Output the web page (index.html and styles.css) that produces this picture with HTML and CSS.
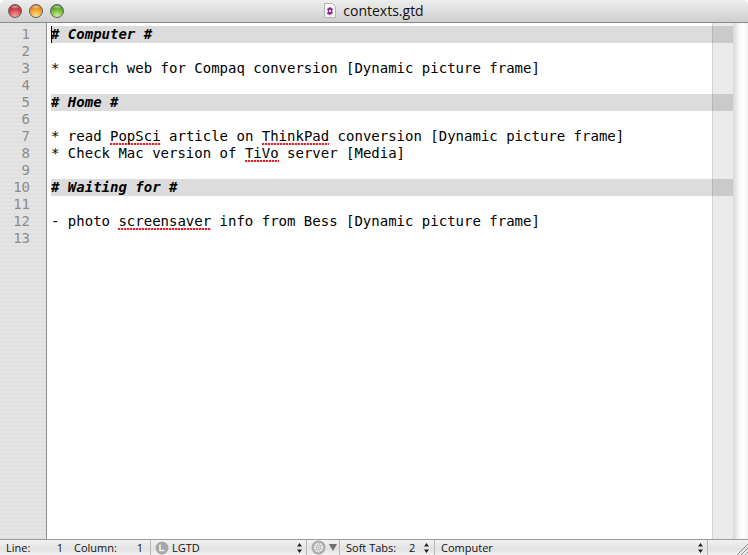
FILE: index.html
```html
<!DOCTYPE html>
<html lang="en">
<head>
<meta charset="utf-8">
<title>contexts.gtd</title>
<link rel="stylesheet" href="styles.css">
</head>
<body>
<div class="window">
  <header class="titlebar">
    <div class="lights">
      <span class="light red"></span>
      <span class="light amber"></span>
      <span class="light green"></span>
    </div>
    <div class="title">
      <svg class="doc" width="12" height="15" viewBox="0 0 12 15"><path d="M.5.5h8l3 3v11H.5z" fill="#f6f6f6" stroke="#b5b5b5"/><path d="M3 6l3-2 3 2-1 2 1 2-3 2-3-1 1-3z" fill="#8c2a86"/><path d="M5 7h2v2H5z" fill="#e8c8e6"/></svg>
      <span>contexts.gtd</span>
    </div>
  </header>
  <main class="editor">
    <div class="gutter">
      <div class="num">1</div><div class="num">2</div><div class="num">3</div><div class="num">4</div><div class="num">5</div><div class="num">6</div><div class="num">7</div><div class="num">8</div><div class="num">9</div><div class="num">10</div><div class="num">11</div><div class="num">12</div><div class="num">13</div>
    </div>
    <div class="text">
      <div class="line head"><span class="caret"></span><b># <i>Computer</i> #</b></div>
      <div class="line"></div>
      <div class="line">* search web for Compaq conversion [Dynamic picture frame]</div>
      <div class="line"></div>
      <div class="line head"><b># <i>Home</i> #</b></div>
      <div class="line"></div>
      <div class="line">* read <span class="sp">PopSci</span> article on <span class="sp">ThinkPad</span> conversion [Dynamic picture frame]</div>
      <div class="line">* Check Mac version of <span class="sp">TiVo</span> server [Media]</div>
      <div class="line"></div>
      <div class="line head"><b># <i>Waiting for</i> #</b></div>
      <div class="line"></div>
      <div class="line">- photo <span class="sp">screensaver</span> info from Bess [Dynamic picture frame]</div>
      <div class="line"></div>
      <div class="margin"></div>
    </div>
    <div class="scrollbar"></div>
  </main>
  <footer class="status">
    <div class="cell pos">
      <span class="lbl-line">Line:</span><span class="val-line">1</span><span class="lbl-col">Column:</span><span class="val-col">1</span>
    </div>
    <div class="cell lang">
      <svg width="14" height="14" viewBox="0 0 14 14"><circle cx="7" cy="7" r="6.5" fill="#a8a8a8"/><path d="M5 3.5V9.5H9.5" fill="none" stroke="#f0f0f0" stroke-width="1.6"/></svg>
      <span class="grow">LGTD</span>
      <svg class="updown" width="5" height="10" viewBox="0 0 5 10"><path d="M2.5 0L5 3.5H0zM2.5 10L0 6.5H5z" fill="#222"/></svg>
    </div>
    <div class="cell gear">
      <svg width="15" height="15" viewBox="0 0 15 15"><circle cx="7.5" cy="7.5" r="7" fill="#a9a9a9"/><circle cx="7.5" cy="7.5" r="3.7" fill="none" stroke="#eee" stroke-width="2.4" stroke-dasharray="1.6 .7"/><circle cx="7.5" cy="7.5" r="2" fill="#eee"/><circle cx="7.5" cy="7.5" r="1.1" fill="#a9a9a9"/></svg>
      <svg width="8" height="7" viewBox="0 0 8 7"><path d="M0 0H8L4 7z" fill="#6e6e6e"/></svg>
    </div>
    <div class="cell tabs">
      <span class="lbl-tabs">Soft Tabs:</span><span class="val-tabs">2</span>
      <svg class="updown" width="5" height="10" viewBox="0 0 5 10"><path d="M2.5 0L5 3.5H0zM2.5 10L0 6.5H5z" fill="#222"/></svg>
    </div>
    <div class="cell symbol">
      <span class="grow">Computer</span>
      <svg class="updown" width="5" height="10" viewBox="0 0 5 10"><path d="M2.5 0L5 3.5H0zM2.5 10L0 6.5H5z" fill="#222"/></svg>
    </div>
    <div class="cell grip">
      <svg width="12" height="12" viewBox="0 0 12 12"><path d="M1 12L12 1M5 12l7-7M9 12l3-3" stroke="#8f8f8f" stroke-width="1" fill="none"/></svg>
    </div>
  </footer>
</div>
</body>
</html>
```
FILE: styles.css
```css
* { box-sizing: border-box; }
html, body { margin: 0; height: 100%; background: #fff; overflow: hidden; }
.window {
  width: 748px;
  height: 555px;
  display: flex;
  flex-direction: column;
  font-family: "Liberation Sans", Arial, sans-serif;
  color: #111;
}
.titlebar {
  height: 23px;
  flex: none;
  position: relative;
  display: flex;
  align-items: center;
  justify-content: center;
  background: linear-gradient(#eeeeee, #cfcfcf);
  border-bottom: 1px solid #8a8a8a;
  border-radius: 5px 5px 0 0;
}
.lights {
  position: absolute;
  left: 8px;
  top: 4px;
  display: flex;
  gap: 7px;
}
.light {
  width: 14px;
  height: 14px;
  border-radius: 50%;
  border: 1px solid #5f5f5f;
}
.red { background: radial-gradient(ellipse 5px 2px at 50% 15%, rgba(255,255,255,.55), transparent), radial-gradient(circle at 50% 95%, #f6aca4 0, #d6434a 55%, #98262c 100%); }
.amber { background: radial-gradient(ellipse 5px 2px at 50% 15%, rgba(255,255,255,.55), transparent), radial-gradient(circle at 50% 95%, #fde49a 0, #f0a02c 55%, #b8640e 100%); }
.green { background: radial-gradient(ellipse 5px 2px at 50% 15%, rgba(255,255,255,.55), transparent), radial-gradient(circle at 50% 95%, #d6f2a0 0, #72b63a 55%, #3a7a1a 100%); }
.title {
  display: flex;
  align-items: center;
  gap: 7px;
  font-family: "Open Sans", "Liberation Sans", sans-serif;
  font-size: 14px;
  margin-top: -1px;
}
.editor {
  flex: 1;
  display: flex;
  min-height: 0;
  background: #fff;
  font-family: "DejaVu Sans Mono", monospace;
  font-size: 14px;
  line-height: 17px;
}
.gutter {
  width: 47px;
  flex: none;
  padding-top: 3px;
  border-right: 1px solid #8f8f8f;
  background: repeating-linear-gradient(#e5e5e5 0, #e5e5e5 2px, #e0e0e0 2px, #e0e0e0 4px);
}
.num {
  height: 17px;
  padding-right: 16px;
  text-align: right;
  color: #8c8c8c;
}
.text {
  flex: 1;
  position: relative;
  padding: 3px 0 0 4px;
}
.line {
  height: 17px;
  color: #000;
  position: relative;
  white-space: pre;
}
.head { background: #dcdcdc; }
.caret {
  position: absolute;
  left: 0;
  top: 0;
  width: 1px;
  height: 17px;
  background: #000;
}
.sp {
  padding-bottom: 1px;
  background: repeating-linear-gradient(90deg, #e5232a 0, #e5232a 2px, rgba(229, 35, 42, .25) 2px, rgba(229, 35, 42, .25) 3px) left bottom / 100% 2px no-repeat;
}
.margin {
  position: absolute;
  top: 0;
  bottom: 0;
  right: 0;
  width: 21px;
  background: rgba(0, 0, 0, .08);
  border-left: 1px solid rgba(0, 0, 0, .1);
}
.scrollbar {
  width: 15px;
  flex: none;
  background: linear-gradient(90deg, #d8d8d8, #f8f8f8 45%, #fff 70%, #f0f0f0);
}
.status {
  height: 16px;
  flex: none;
  display: flex;
  border-top: 1px solid #9a9a9a;
  background: linear-gradient(#f2f2f2, #e2e2e2 60%, #f2f2f2);
  font-family: "Open Sans", "Liberation Sans", sans-serif;
  font-size: 11px;
  line-height: 15px;
}
.cell {
  display: flex;
  align-items: center;
  border-right: 1px solid #b9b9b9;
  height: 15px;
}
.pos { width: 151px; padding-left: 6px; }
.lbl-line { width: 36px; }
.val-line { width: 21px; text-align: right; margin-right: 11px; }
.lbl-col { width: 50px; white-space: nowrap; }
.val-col { width: 19px; text-align: right; }
.lang { width: 156px; padding-left: 4px; padding-right: 4px; gap: 3px; }
.grow { flex: 1; }
.updown { flex: none; }
.gear { width: 33px; padding-left: 4px; gap: 3px; }
.tabs { width: 95px; padding-left: 6px; }
.lbl-tabs { width: 63px; white-space: nowrap; }
.val-tabs { width: 12px; }
.tabs .updown { margin-left: 3px; }
.symbol { flex: 1; padding-left: 6px; padding-right: 4px; }
.grip { width: 40px; border-right: 0; justify-content: flex-end; align-items: flex-end; }
```
